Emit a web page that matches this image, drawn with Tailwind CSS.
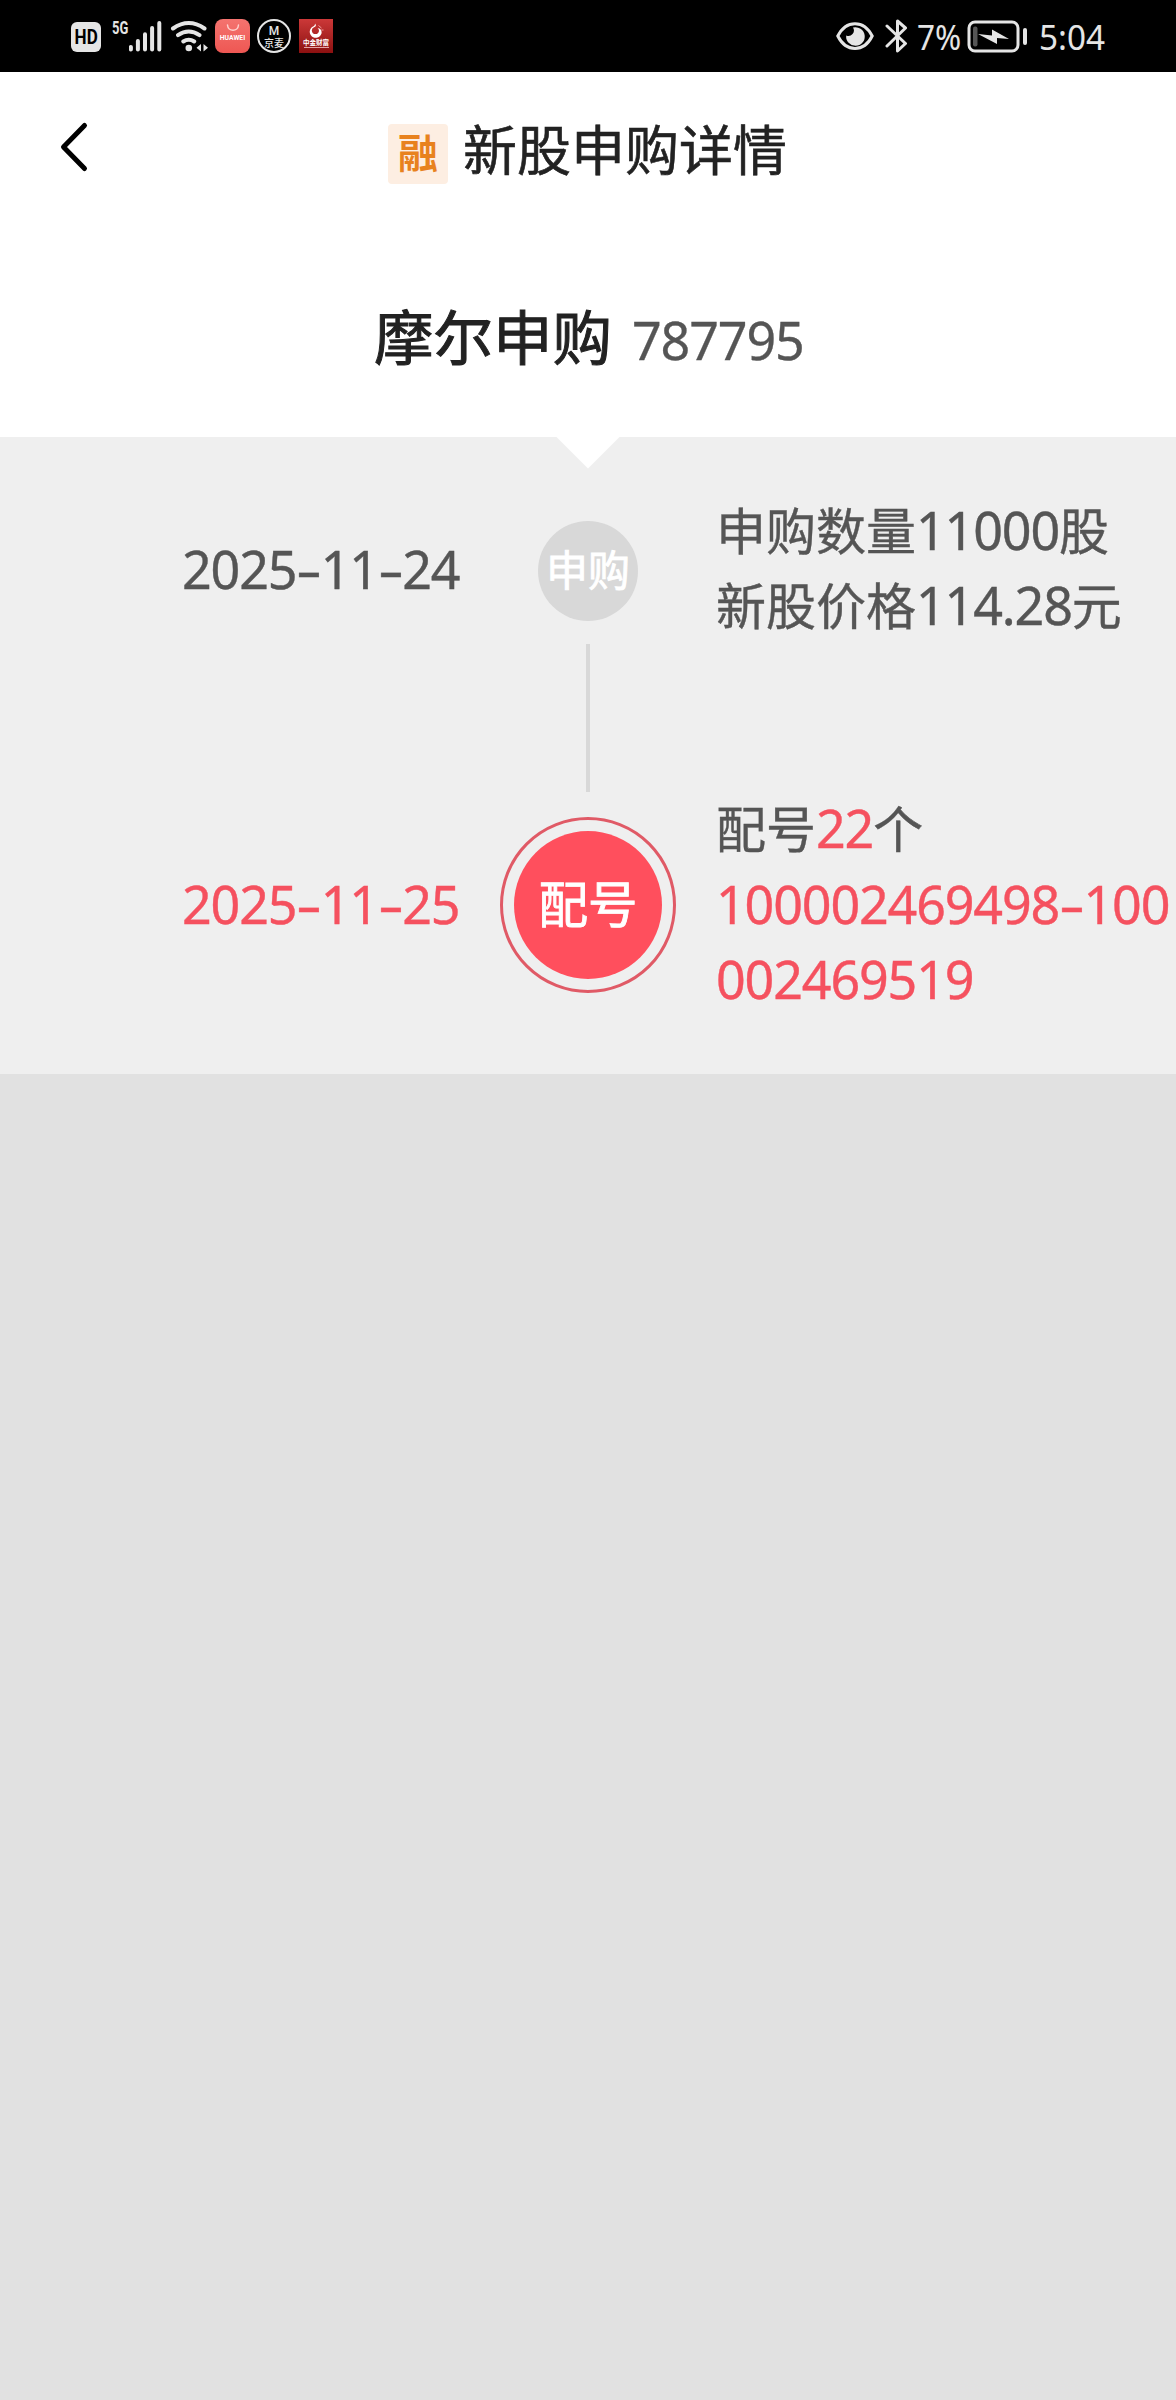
<!DOCTYPE html>
<html lang="zh-CN">
<head>
<meta charset="utf-8">
<title>新股申购详情</title>
<script src="https://cdn.jsdelivr.net/npm/@tailwindcss/browser@4"></script>
</head>
<body class="w-[1176px] h-[2400px] overflow-hidden bg-[#e1e1e1] font-['Noto_Sans','Noto_Sans_CJK_SC',sans-serif] text-[#555]">

<!-- Status bar -->
<div class="h-[72px] bg-black flex justify-between text-[#e5e5e5]">
  <div class="flex items-start pl-[71px]">
    <div class="mt-[22px] w-[30px] h-[30px] rounded-[6px] bg-[#e5e5e5] text-black flex items-center justify-center font-['Roboto',sans-serif] font-bold text-[18px] leading-none"><span class="scale-y-[1.100] scale-x-[0.950]">HD</span></div>
    <div class="mt-[19px] ml-[11px] w-[17px] font-['Roboto',sans-serif] font-bold text-[18.500px] leading-[18px] origin-left scale-x-[0.700] whitespace-nowrap">5G</div>
    <svg class="mt-[19px]" width="33" height="34" viewBox="129 19 33 34" stroke="#e5e5e5" stroke-width="4" stroke-linecap="round"><path d="M130.900 47v2.400M137.900 41v8.400M145 34.300v15.100M152.100 28v21.400M159.300 22.900v26.500"/></svg>
    <svg class="mt-[19px] ml-[8px]" width="40" height="34" viewBox="170 19 40 34" fill="none" stroke="#e5e5e5" stroke-width="4" stroke-linecap="round"><path d="M173 28.500q15.700-11 31.500 0M178 35.200q10.700-7.500 21.500 0M183.300 41.500q5.500-3.600 10.900 0"/><circle cx="188.800" cy="48" r="3.300" fill="#e5e5e5" stroke="none"/><path d="M201 44v7.500l-4.500-3.700zM203.500 44v7.500l4.500-3.700z" fill="#e5e5e5" stroke="none"/></svg>
    <div class="mt-[19px] ml-[5px] w-[35px] h-[34px] rounded-[8px] bg-gradient-to-b from-[#f4736f] to-[#ee5753] flex flex-col items-center text-white">
      <svg class="mt-[4px]" width="14" height="9" viewBox="0 0 14 9" fill="none" stroke="#ffd0cd" stroke-width="1.500" stroke-linecap="round"><path d="M1.500 2C2 9 12 9 12.500 2"/></svg>
      <div class="mt-[3px] font-['Roboto',sans-serif] font-bold text-[6.800px] leading-[7px]">HUAWEI</div>
    </div>
    <div class="mt-[19px] ml-[7px] w-[34px] h-[34px] rounded-full border-2 border-[#e5e5e5] flex flex-col items-center">
      <div class="mt-[4px] font-['Roboto',sans-serif] font-medium text-[12px] leading-[12px]">M</div>
      <div class="font-['Noto_Sans_CJK_SC',sans-serif] font-medium text-[10px] leading-[11px] whitespace-nowrap">京麦</div>
    </div>
    <div class="mt-[19px] ml-[8px] w-[34px] h-[34px] bg-gradient-to-b from-[#cc3838] to-[#8c1010] flex flex-col items-center text-white">
      <svg class="mt-[4px]" width="16" height="15" viewBox="0 0 16 15"><path d="M7 .5C8.500 2 8 3 6.500 4A3.600 3.600 0 1 0 11 8c0-1.500-.6-2.300-1.500-3 3.500.6 4.500 3 4 5.500A6 6 0 1 1 5 3.500C6.500 2.700 7 2 7 .5z" fill="#fff"/><path d="M10.500 2.500l3 2.500M13.500 7h2" stroke="#e99" stroke-width="1"/></svg>
      <div class="mt-[1px] font-['Noto_Sans_CJK_SC',sans-serif] font-bold text-[6.500px] leading-[7px] whitespace-nowrap">中金财富</div>
      <div class="mt-[1px] w-[25px] h-px bg-[#e3a5a5]"></div>
    </div>
  </div>
  <div class="flex items-start">
    <svg class="mt-[21px]" width="38" height="30" viewBox="0 0 38 30"><path d="M1.800 15C10-1.500 28-1.500 36.200 15 28 31.500 10 31.500 1.800 15z" fill="none" stroke="#e5e5e5" stroke-width="3"/><path d="M17 6.500A9.300 9.300 0 1 1 10.200 14.500 5.500 5.500 0 0 0 17 6.500z" fill="#e5e5e5"/></svg>
    <svg class="mt-[19px] ml-[11px]" width="23" height="34" viewBox="0 0 23 34" fill="none" stroke="#e5e5e5" stroke-width="3" stroke-linejoin="round" stroke-linecap="round"><path d="M2 7l18.500 17.500L12.500 32V2l8 7L2 27"/></svg>
    <div class="ml-[9px] w-[48px] font-['Noto_Sans',sans-serif] text-[35px] leading-[74px] origin-left scale-x-[0.900] whitespace-nowrap">7%</div>
    <svg class="mt-[20px] ml-[2px]" width="61" height="33" viewBox="0 0 61 33"><rect x="2" y="2" width="49" height="29" rx="6" fill="none" stroke="#e5e5e5" stroke-width="3"/><rect x="6" y="6.500" width="4.500" height="20" rx="2" fill="#555"/><path d="M11 14l14 1.500V9.500l17 9.500-12-1v6z" fill="#e5e5e5"/><rect x="56" y="8" width="4" height="17" rx="2" fill="#e5e5e5"/></svg>
    <div class="ml-[11px] w-[137px] font-['Noto_Sans',sans-serif] text-[35px] leading-[74px] origin-left scale-x-[0.950] whitespace-nowrap">5:04</div>
  </div>
</div>

<!-- Title bar and stock name -->
<div class="h-[365px] bg-white text-[#222] font-['Noto_Sans_CJK_SC',sans-serif]">
  <div class="flex items-start h-[190px]">
    <svg class="ml-[60px] mt-[49px]" width="30" height="52" viewBox="60 121 30 52" fill="none" stroke="#000" stroke-width="5" stroke-linecap="round" stroke-linejoin="round"><path d="M84.500 125.500L63.500 147l21 21.500"/></svg>
    <div class="ml-[298px] mt-[52px] w-[60px] h-[60px] rounded-[4px] bg-[#fdeee2] text-[#e8821e] font-bold text-[40px] leading-[55px] text-center">融</div>
    <h1 class="ml-[15px] mt-[40px] text-[54px] leading-[72px] [-webkit-text-stroke:0.600px]">新股申购详情</h1>
  </div>
  <div class="flex items-baseline pl-[374px] pt-[32px] leading-[80px]">
    <span class="w-[258px] text-[59.500px] [-webkit-text-stroke:1px]">摩尔申购</span>
    <span class="text-[52px] tracking-[-1.150px] text-[#555] font-['Noto_Sans',sans-serif] [-webkit-text-stroke:0.300px]">787795</span>
  </div>
</div>

<!-- Subscription timeline -->
<div class="relative h-[637px] bg-[#efefef] grid grid-cols-[488px_200px_488px] grid-rows-[207px_148px_282px] text-[50px] leading-[75px] whitespace-nowrap [-webkit-text-stroke:0.400px]">
  <svg class="absolute left-[556px] top-0" width="64" height="32" viewBox="0 0 64 32"><path d="M.500 0h63L32 31.500z" fill="#fff"/></svg>

  <div class="pl-[182px] pt-[94px] text-[52px] tracking-[-1.150px]">2025<span class="inline-block w-[24.300px] text-center scale-x-[1.550]">-</span>11<span class="inline-block w-[24.300px] text-center scale-x-[1.550]">-</span>24</div>
  <div class="mt-[84px] mx-auto w-[100px] h-[100px] rounded-full bg-[#d8d8d8] text-white text-[42px] leading-[98px] [-webkit-text-stroke:0.800px] text-center">申购</div>
  <div class="pl-[28px] pt-[57px]">
    <div class="h-[75px]">申购数量<span class="text-[52px] leading-none tracking-[-1.150px]">11000</span>股</div>
    <div class="h-[75px]">新股价格<span class="text-[52px] leading-none tracking-[-1.150px]">114.28</span>元</div>
  </div>

  <div class="col-start-2 mx-auto w-[4px] h-[148px] bg-[#d8d8d8]"></div>

  <div class="col-start-1 pl-[182px] pt-[74px] text-[52px] tracking-[-1.150px] text-[#f5515f]">2025<span class="inline-block w-[24.300px] text-center scale-x-[1.550]">-</span>11<span class="inline-block w-[24.300px] text-center scale-x-[1.550]">-</span>25</div>
  <div class="mt-[25px] mx-auto w-[176px] h-[176px] rounded-full border-[3px] border-[#e05a66] flex items-center justify-center">
    <div class="w-[148px] h-[148px] rounded-full bg-[#ff4f5d] text-white text-[49.500px] leading-[146px] [-webkit-text-stroke:0.900px] text-center">配号</div>
  </div>
  <div class="pl-[28px] text-[#f5515f]">
    <div class="h-[75px] text-[#555]">配号<span class="text-[52px] leading-none tracking-[-1.150px] text-[#f5515f]">22</span>个</div>
    <div class="-mt-px h-[75px] text-[52px] tracking-[-1.150px]">100002469498<span class="inline-block w-[24.300px] text-center scale-x-[1.550]">-</span>100</div>
    <div class="h-[75px] text-[52px] tracking-[-1.150px]">002469519</div>
  </div>
</div>

</body>
</html>
